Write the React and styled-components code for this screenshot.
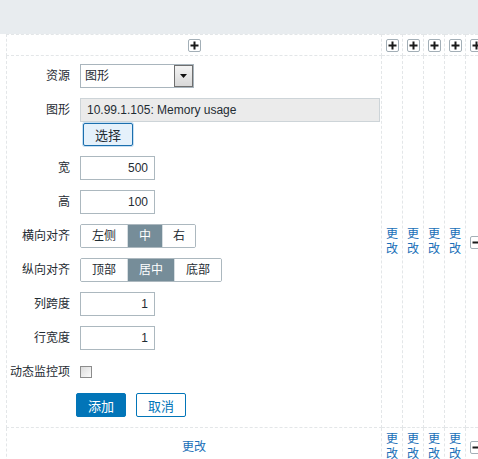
import React, { useState } from "react";
import styled, { createGlobalStyle } from "styled-components";

const GlobalStyle = createGlobalStyle`
  html, body {
    margin: 0;
    padding: 0;
    background: #fff;
    overflow: hidden;
  }
  body {
    font-family: Arial, "Liberation Sans", "Noto Sans CJK SC", sans-serif;
    font-size: 12px;
    color: #1f2c33;
  }
`;

const TopBar = styled.div`
  height: 34px;
  background: #e8ecef;
`;

const Wrap = styled.div`
  width: 478px;
  overflow: hidden;
  padding-left: 6px;
`;

const Grid = styled.table`
  border-collapse: collapse;
  table-layout: fixed;
  width: 480px;

  td {
    border: 1px dashed #e3e6e8;
    padding: 0;
    vertical-align: middle;
  }
`;

const MainCell = styled.td`
  text-align: center;
`;

const SideCell = styled.td`
  padding: ${(p) => (p.$tight ? 0 : 4)}px 4px ${(p) => (p.$tight ? 0 : 4)}px 4px !important;
  text-align: left;
`;

const PlusRow = styled.tr`
  height: 21px;
`;

const IconButton = styled.span`
  display: inline-flex;
  align-items: center;
  justify-content: center;
  width: 13px;
  height: 13px;
  box-sizing: border-box;
  border: 1px solid #a3afb7;
  border-radius: 2px;
  background: #fff;
  vertical-align: middle;

  svg {
    display: block;
  }
`;

const Plus = () => (
  <IconButton>
    <svg width="9" height="9" viewBox="0 0 9 9">
      <rect x="3.5" y="0.5" width="2" height="8" fill="#1a1a1a" />
      <rect x="0.5" y="3.5" width="8" height="2" fill="#1a1a1a" />
    </svg>
  </IconButton>
);

const Minus = () => (
  <IconButton>
    <svg width="9" height="9" viewBox="0 0 9 9">
      <rect x="0.5" y="3.5" width="8" height="2" fill="#1a1a1a" />
    </svg>
  </IconButton>
);

const EditLink = styled.a`
  color: #1a6fb8;
  text-decoration: none;
  line-height: 15px;
  display: block;
  word-break: break-all;
  cursor: pointer;
`;

const Form = styled.div`
  display: grid;
  grid-template-columns: 62px auto;
  column-gap: 10px;
  row-gap: 10px;
  padding: 8px 0 10px 1px;
  text-align: left;
`;

const Label = styled.label`
  text-align: right;
  line-height: 24px;
  white-space: nowrap;
`;

const Field = styled.div`
  display: flex;
  flex-direction: column;
  align-items: flex-start;
  min-height: 24px;
  justify-content: center;
`;

const SelectBox = styled.div`
  width: 114px;
  height: 24px;
  box-sizing: border-box;
  border: 1px solid #a9b5bd;
  display: flex;
  align-items: stretch;
  background: #fff;
`;

const SelectText = styled.span`
  flex: 1;
  padding-left: 4px;
  line-height: 22px;
`;

const SelectArrow = styled.span`
  width: 17px;
  border: 1px solid #6f6f6f;
  background: linear-gradient(#f4f4f4, #d8d8d8);
  display: flex;
  align-items: center;
  justify-content: center;
`;

const TextInput = styled.input`
  width: ${(p) => p.$width || 75}px;
  height: 24px;
  box-sizing: border-box;
  border: 1px solid #acb8bf;
  padding: 0 6px;
  font: inherit;
  color: #1f2c33;
  text-align: ${(p) => (p.$right ? "right" : "left")};
  background: ${(p) => (p.readOnly ? "#ebebeb" : "#fff")};
  border-color: ${(p) => (p.readOnly ? "#cdd4d8" : "#acb8bf")};
  outline: none;
`;

const SelectButton = styled.button`
  margin: 1px 0 0 3px;
  width: 50px;
  height: 23px;
  box-sizing: border-box;
  border: 1px solid #1b6fae;
  border-radius: 2px;
  background: #e5f1fb;
  box-shadow: 0 0 0 1px #c7dff2;
  font: inherit;
  font-size: 13px;
  color: #1f2c33;
  padding: 0;
`;

const Segmented = styled.div`
  display: inline-flex;
  height: 24px;
  box-sizing: border-box;
  border: 1px solid #acb8bf;
  border-radius: 2px;
  overflow: hidden;
`;

const Segment = styled.span`
  padding: 0 ${(p) => p.$pad || 11}px;
  line-height: 22px;
  background: ${(p) => (p.$active ? "#768d99" : "#fff")};
  color: ${(p) => (p.$active ? "#fff" : "#1f2c33")};
  & + & {
    border-left: 1px solid ${(p) => (p.$active ? "#768d99" : "#d6dde1")};
  }
`;

const Check = styled.span`
  width: 12px;
  height: 12px;
  box-sizing: border-box;
  border: 1px solid #8c8c8c;
  background: linear-gradient(135deg, #dcdcdc, #fbfbfb);
`;

const Actions = styled.div`
  display: flex;
  gap: 10px;
  margin-left: -4px;
  margin-top: -1px;
`;

const Button = styled.button`
  width: 50px;
  height: 24px;
  box-sizing: border-box;
  border-radius: 2px;
  font: inherit;
  font-size: 13px;
  padding: 0;
  border: 1px solid #0275b8;
  background: ${(p) => (p.$primary ? "#0275b8" : "#fff")};
  color: ${(p) => (p.$primary ? "#fff" : "#0275b8")};
`;

const sideCols = [0, 1, 2, 3];

const Side = ({ last }) => (
  <>
    {sideCols.map((i) => (
      <SideCell key={i}>
        <EditLink>更改</EditLink>
      </SideCell>
    ))}
    <SideCell>{last}</SideCell>
  </>
);

export default function App() {
  const [dynamic, setDynamic] = useState(false);

  return (
    <>
      <GlobalStyle />
      <TopBar />
      <Wrap>
        <Grid>
          <colgroup>
            <col style={{ width: 375 }} />
            <col style={{ width: 21 }} />
            <col style={{ width: 21 }} />
            <col style={{ width: 21 }} />
            <col style={{ width: 21 }} />
            <col style={{ width: 21 }} />
          </colgroup>
          <tbody>
            <PlusRow>
              <MainCell>
                <Plus />
              </MainCell>
              {[0, 1, 2, 3, 4].map((i) => (
                <SideCell key={i} $tight>
                  <Plus />
                </SideCell>
              ))}
            </PlusRow>
            <tr>
              <td>
                <Form>
                  <Label>资源</Label>
                  <Field>
                    <SelectBox>
                      <SelectText>图形</SelectText>
                      <SelectArrow>
                        <svg width="7" height="4" viewBox="0 0 7 4">
                          <path d="M0 0h7L3.5 4z" fill="#111" />
                        </svg>
                      </SelectArrow>
                    </SelectBox>
                  </Field>

                  <Label>图形</Label>
                  <Field>
                    <TextInput readOnly $width={300} value="10.99.1.105: Memory usage" />
                    <SelectButton>选择</SelectButton>
                  </Field>

                  <Label>宽</Label>
                  <Field>
                    <TextInput $right defaultValue="500" />
                  </Field>

                  <Label>高</Label>
                  <Field>
                    <TextInput $right defaultValue="100" />
                  </Field>

                  <Label>横向对齐</Label>
                  <Field>
                    <Segmented>
                      <Segment>左侧</Segment>
                      <Segment $active>中</Segment>
                      <Segment $pad={10}>右</Segment>
                    </Segmented>
                  </Field>

                  <Label>纵向对齐</Label>
                  <Field>
                    <Segmented>
                      <Segment>顶部</Segment>
                      <Segment $active>居中</Segment>
                      <Segment>底部</Segment>
                    </Segmented>
                  </Field>

                  <Label>列跨度</Label>
                  <Field>
                    <TextInput $right defaultValue="1" />
                  </Field>

                  <Label>行宽度</Label>
                  <Field>
                    <TextInput $right defaultValue="1" />
                  </Field>

                  <Label>动态监控项</Label>
                  <Field onClick={() => setDynamic(!dynamic)}>
                    <Check />
                  </Field>

                  <span />
                  <Actions>
                    <Button $primary>添加</Button>
                    <Button>取消</Button>
                  </Actions>
                </Form>
              </td>
              <Side last={<Minus />} />
            </tr>
            <tr>
              <MainCell>
                <EditLink>更改</EditLink>
              </MainCell>
              <Side last={<Minus />} />
            </tr>
          </tbody>
        </Grid>
      </Wrap>
    </>
  );
}
